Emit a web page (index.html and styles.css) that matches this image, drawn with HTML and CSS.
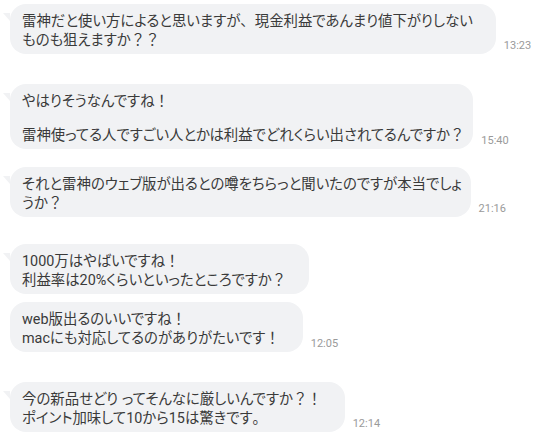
FILE: index.html
```html
<!DOCTYPE html>
<html lang="ja">
  <head>
    <meta charset="UTF-8" />
    <title>メッセージ</title>
    <link rel="stylesheet" href="styles.css">
  </head>
  <body>
    <div class="chat">
      <div class="row">
        <div class="bubble tail">雷神だと使い方によると思いますが<span class="fw">、</span>現金利益であんまり値下がりしない<br />ものも狙えますか<span class="fw">？？</span></div>
        <span class="time">13:23</span>
      </div>

      <div class="row gap-xl">
        <div class="bubble tail tight">やはりそうなんですね<span class="fw">！</span><span class="blank"></span>雷神使ってる人ですごい人とかは利益でどれくらい出されてるんですか<span class="fw">？</span></div>
        <span class="time">15:40</span>
      </div>

      <div class="row gap-m">
        <div class="bubble tail tight">それと雷神のウェブ版が出るとの噂をちらっと聞いたのですが本当でしょ<br />うか<span class="fw">？</span></div>
        <span class="time">21:16</span>
      </div>

      <div class="row gap-l">
        <div class="bubble tail">1000万はやばいですね<span class="fw">！</span><br />利益率は20%くらいといったところですか<span class="fw">？</span></div>
      </div>

      <div class="row gap-s">
        <div class="bubble">web版出るのいいですね<span class="fw">！</span><br />macにも対応してるのがありがたいです<span class="fw">！</span></div>
        <span class="time">12:05</span>
      </div>

      <div class="row gap-xl">
        <div class="bubble tail">今の新品せどり ってそんなに厳しいんですか<span class="fw">？！</span><br />ポイント加味して10から15は驚きです<span class="fw">。</span></div>
        <span class="time">12:14</span>
      </div>
    </div>
  </body>
</html>
```

FILE: styles.css
```css
body {
  margin: 0;
  background: #ffffff;
  font-family: Roboto, "Noto Sans CJK JP", sans-serif;
  color: #3a3a3a;
}
.chat {
  padding: 4px 0 0 10px;
}
.row {
  display: flex;
  align-items: flex-end;
}
.gap-s {
  margin-top: 8px;
}
.gap-m {
  margin-top: 18px;
}
.gap-l {
  margin-top: 27px;
}
.gap-xl {
  margin-top: 30px;
}
.bubble {
  position: relative;
  background: #f1f2f4;
  border-radius: 16px;
  padding: 8px 23px 4px 12px;
  font-size: 14.4px;
  line-height: 19px;
  font-feature-settings: "palt";
}
.bubble.tight {
  padding-right: 9px;
}
/* keep punctuation at full width */
.fw {
  font-feature-settings: normal;
  text-spacing-trim: space-all;
}
.tail::before {
  content: "";
  position: absolute;
  left: -7px;
  top: 9px;
  border-top: 8px solid #f1f2f4;
  border-left: 7px solid transparent;
}
.blank {
  display: block;
  height: 15px;
}
.time {
  margin: 0 0 2px 8px;
  font-size: 11px;
  color: #9a9a9a;
}
```
